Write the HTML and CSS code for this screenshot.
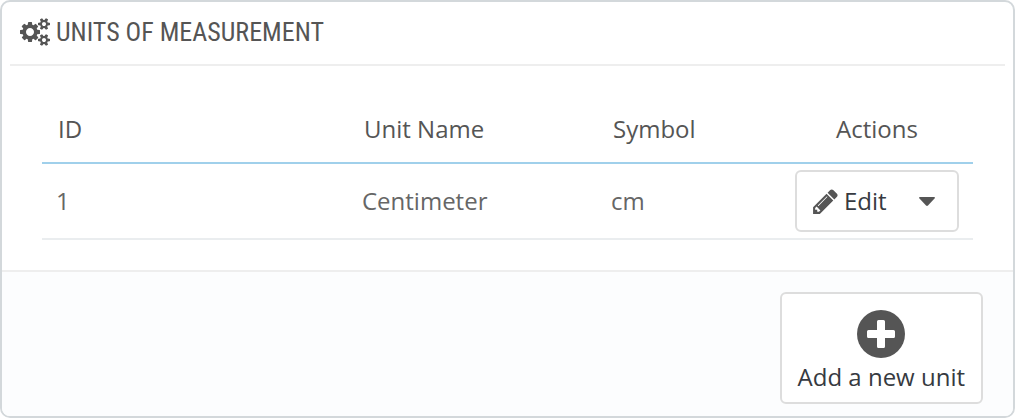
FILE: index.html
```html
<!DOCTYPE html>
<html lang="en">
<head>
<meta charset="utf-8">
<meta name="viewport" content="width=device-width, initial-scale=1">
<title>Units of measurement</title>
<link rel="stylesheet" href="styles.css">
</head>
<body>
<main class="panel">
  <h1 class="panel-heading">
    <svg class="icon-cogs" viewBox="0 0 1920 1792" aria-hidden="true"><path d="M896 896q0-106-75-181t-181-75-181 75-75 181 75 181 181 75 181-75 75-181zm768 512q0-52-38-90t-90-38-90 38-38 90q0 53 37.500 90.500t90.500 37.500 90.500-37.500 37.500-90.500zm0-1024q0-52-38-90t-90-38-90 38-38 90q0 53 37.500 90.500t90.500 37.500 90.500-37.500 37.500-90.500zm-384 421v185q0 10-7 19.500t-16 10.500l-155 24q-11 35-32 76 34 48 90 115 7 11 7 20 0 12-7 19-23 30-82.500 89.500t-78.500 59.500q-11 0-21-7l-115-90q-37 19-77 31-11 108-23 155-7 24-30 24h-186q-11 0-20-7.500t-10-17.500l-23-153q-34-10-75-31l-118 89q-7 7-20 7-11 0-21-8-144-133-144-160 0-9 7-19 10-14 41-53t47-61q-23-44-35-82l-152-24q-10-1-17-9.500t-7-19.500v-185q0-10 7-19.500t16-10.500l155-24q11-35 32-76-34-48-90-115-7-11-7-20 0-12 7-20 22-30 82-89t79-59q11 0 21 7l115 90q34-18 77-32 11-108 23-154 7-24 30-24h186q11 0 20 7.500t10 17.500l23 153q34 10 75 31l118-89q8-7 20-7 11 0 21 8 144 133 144 160 0 8-7 19-12 16-42 54t-45 60q23 48 34 82l152 23q10 2 17 10.500t7 19.500zm640 533v140q0 16-149 31-12 27-30 52 51 113 51 138 0 4-4 7-122 71-124 71-8 0-46-47t-52-68q-20 2-30 2t-30-2q-14 21-52 68t-46 47q-2 0-124-71-4-3-4-7 0-25 51-138-18-25-30-52-149-15-149-31v-140q0-16 149-31 13-29 30-52-51-113-51-138 0-4 4-7 4-2 35-20t59-34 30-16q8 0 46 46.500t52 67.500q20-2 30-2t30 2q51-71 92-112l6-2q4 0 124 70 4 3 4 7 0 25-51 138 17 23 30 52 149 15 149 31zm0-1024v140q0 16-149 31-12 27-30 52 51 113 51 138 0 4-4 7-122 71-124 71-8 0-46-47t-52-68q-20 2-30 2t-30-2q-14 21-52 68t-46 47q-2 0-124-71-4-3-4-7 0-25 51-138-18-25-30-52-149-15-149-31v-140q0-16 149-31 13-29 30-52-51-113-51-138 0-4 4-7 4-2 35-20t59-34 30-16q8 0 46 46.500t52 67.500q20-2 30-2t30 2q51-71 92-112l6-2q4 0 124 70 4 3 4 7 0 25-51 138 17 23 30 52 149 15 149 31z"/></svg>
    <span>UNITS OF MEASUREMENT</span>
  </h1>
  <div class="panel-body">
    <table class="units">
      <thead>
        <tr>
          <th scope="col">ID</th>
          <th class="col-name" scope="col">Unit Name</th>
          <th class="col-symbol" scope="col">Symbol</th>
          <th class="col-actions" scope="col">Actions</th>
        </tr>
      </thead>
      <tbody>
        <tr>
          <td>1</td>
          <td>Centimeter</td>
          <td>cm</td>
          <td>
            <div class="btn-group">
              <button class="btn-edit" type="button">
                <svg class="icon-pencil" viewBox="0 0 1792 1792" aria-hidden="true"><path d="M491 1536l91-91-235-235-91 91v107h128v128h107zm523-928q0-22-22-22-10 0-17 7l-542 542q-7 7-7 17 0 22 22 22 10 0 17-7l542-542q7-7 7-17zm-54-192l416 416-832 832h-416v-416zm683 96q0 53-37 90l-166 166-416-416 166-165q36-38 90-38 53 0 91 38l235 234q37 39 37 91z"/></svg>
                <span>Edit</span>
              </button>
              <button class="btn-toggle" type="button" aria-label="More actions">
                <svg class="icon-caret" viewBox="0 0 16 9" aria-hidden="true"><path d="M1 0H15Q16 0 16 1L9 8.500Q8 9.400 7 8.500L0 1Q0 0 1 0Z"/></svg>
              </button>
            </div>
          </td>
        </tr>
      </tbody>
    </table>
  </div>
  <footer class="panel-footer">
    <button class="btn-add" type="button">
      <svg class="icon-plus" viewBox="0 0 48 48" aria-hidden="true"><circle cx="24" cy="24" r="24"/><path class="plus-sign" d="M21.500 10h5a1.500 1.500 0 0 1 1.500 1.500V20h8.500a1.500 1.500 0 0 1 1.500 1.500v5a1.500 1.500 0 0 1-1.500 1.500H28v8.500a1.500 1.500 0 0 1-1.500 1.500h-5a1.500 1.500 0 0 1-1.500-1.500V28h-8.500a1.500 1.500 0 0 1-1.500-1.500v-5a1.500 1.500 0 0 1 1.500-1.500H20v-8.500a1.500 1.500 0 0 1 1.500-1.500z"/></svg>
      <span>Add a new unit</span>
    </button>
  </footer>
</main>
</body>
</html>
```
FILE: styles.css
```css
* {
  box-sizing: border-box;
}

body {
  margin: 0;
  background: #fff;
  color: #555;
  font: 24px/32px "Open Sans", "Noto Sans", sans-serif;
}

svg {
  display: block;
  flex: none;
  fill: #555;
}

button {
  margin: 0;
  border: 0;
  background: none;
  color: #363a41;
  font: inherit;
  cursor: pointer;
}

.panel {
  border: 2px solid #d3d8db;
  border-radius: 10px;
  overflow: hidden;
}

.panel-heading {
  display: flex;
  align-items: center;
  gap: 6px;
  height: 64px;
  margin: 0 8px;
  padding: 0 10px 2px;
  border-bottom: 2px solid #eee;
  font: 400 26px/32px "Ubuntu Condensed", "Roboto Condensed", "Liberation Sans Narrow", "Open Sans Condensed", sans-serif;
}

.icon-cogs {
  width: 30px;
  height: 28px;
}

.panel-body {
  padding: 30px 40px;
}

.units {
  width: 100%;
  border-collapse: separate;
  border-spacing: 0;
  table-layout: fixed;
}

.units th {
  padding: 17px 16px;
  border-bottom: 2px solid #a0d0eb;
  font-weight: 400;
  text-align: left;
}

.units td {
  padding: 6px 14px;
  border-bottom: 2px solid #eaedef;
  color: #666;
}

.units .col-name {
  width: 249px;
}

.units .col-symbol {
  width: 184px;
}

.units .col-actions {
  width: 192px;
  text-align: center;
}

.btn-group {
  display: flex;
  height: 62px;
  border: 2px solid #ddd;
  border-radius: 6px;
  background: #fff;
}

.btn-edit {
  display: flex;
  flex: 1;
  align-items: center;
  gap: 4px;
  padding: 0 0 0 14px;
}

.icon-pencil {
  width: 29px;
  height: 29px;
}

.btn-toggle {
  display: flex;
  align-items: center;
  padding: 0 22px;
}

.icon-caret {
  width: 16px;
  height: 9px;
}

.panel-footer {
  display: flex;
  justify-content: flex-end;
  padding: 20px 30px 12px;
  border-top: 2px solid #eee;
  background: #fcfdfe;
}

.btn-add {
  display: flex;
  flex-direction: column;
  align-items: center;
  gap: 3px;
  padding: 16px 16px 9px;
  border: 2px solid #ddd;
  border-radius: 6px;
  background: #fff;
}

.icon-plus {
  width: 48px;
  height: 48px;
}

.plus-sign {
  fill: #fff;
}
```
